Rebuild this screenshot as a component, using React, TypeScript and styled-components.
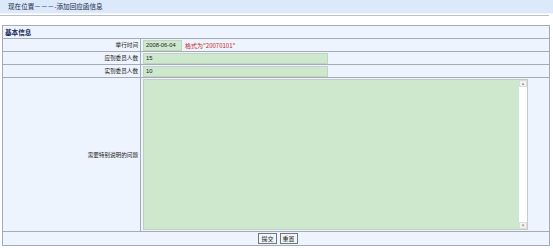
import styled, { createGlobalStyle } from 'styled-components'

const GlobalStyle = createGlobalStyle`
    html, body {
        margin: 0;
        padding: 0;
        background: #fff;
        font-family: "Noto Sans CJK SC", "Noto Sans", sans-serif;
        -webkit-text-size-adjust: none;
    }
`

const Location = styled.div`
    height: 13px;
    line-height: 13px;
    padding-left: 8px;
    background: #dbe9fa;
    color: #1c2c4c;
    font-size: 6.6px;
    border-bottom: 1px solid #f4f8fd;
`
const LocationRule = styled.div`
    height: 1px;
    margin: 1px 4px 0 0;
    background: #b9c1c9;
`
const Panel = styled.div`
    margin: 9px 3px 0 2px;
    border: 1px solid #a3acb6;
    display: grid;
    grid-template-columns: 138px 1fr;
    background: #eef4fd;
`
const Caption = styled.div`
    grid-column: 1 / -1;
    height: 12px;
    line-height: 12px;
    padding-left: 2px;
    font-size: 6.6px;
    font-weight: 700;
    color: #101a58;
    border-bottom: 1px solid #a3acb6;
`
const Label = styled.div<{ $tall?: boolean }>`
    display: flex;
    align-items: center;
    justify-content: flex-end;
    padding-right: 2px;
    height: ${props => props.$tall ? '153px' : '12px'};
    font-size: 5.6px;
    color: #222;
    border-right: 1px solid #a3acb6;
    border-bottom: 1px solid #a3acb6;
`
const Field = styled.div`
    display: flex;
    align-items: center;
    gap: 3px;
    padding-left: 2px;
    border-bottom: 1px solid #a3acb6;
`
const TextInput = styled.input<{ $width: string }>`
    box-sizing: border-box;
    width: ${props => props.$width};
    height: 11px;
    margin: 0;
    padding: 0 2px;
    border: 1px solid #c4d2c4;
    background: #cde8cd;
    font-family: "Liberation Sans", sans-serif;
    font-size: 5.8px;
    color: #222;
    outline: none;
`
const Hint = styled.span`
    font-size: 6px;
    color: #c41a1a;
    font-family: "Noto Sans CJK SC", sans-serif;
`
const RemarksBox = styled.div`
    display: flex;
    width: 385px;
    height: 151px;
    border: 1px solid #c4ccc4;
    box-sizing: border-box;
`
const Remarks = styled.textarea`
    flex: 1;
    margin: 0;
    padding: 0;
    border: none;
    background: #cde8cd;
    resize: none;
    outline: none;
    overflow: hidden;
`
const ScrollTrack = styled.div`
    width: 8px;
    display: flex;
    flex-direction: column;
    justify-content: space-between;
    background: #fff;
`
const ScrollArrow = styled.div`
    height: 7px;
    box-sizing: border-box;
    border: 1px solid #dcdcdc;
    background: #f3f3f3;
    color: #999;
    font-size: 5px;
    line-height: 5px;
    text-align: center;
    font-family: "DejaVu Sans", sans-serif;
`
const Actions = styled.div`
    grid-column: 1 / -1;
    display: flex;
    justify-content: center;
    gap: 3px;
    padding: 1px 0 1px 4px;
`
const Button = styled.button`
    height: 11px;
    padding: 0 2px;
    margin: 0;
    border: 1px solid #6f7780;
    background: #f2f4f6;
    font-family: "Noto Sans CJK SC", sans-serif;
    font-size: 6px;
    line-height: 9px;
    color: #222;
`

export default function App() {
    return (
        <>
            <GlobalStyle />
            <Location>现在位置－－－-添加回应函信息</Location>
            <LocationRule />
            <Panel>
                <Caption>基本信息</Caption>
                <Label>举行时间</Label>
                <Field>
                    <TextInput $width="39px" defaultValue="2008-06-04" />
                    <Hint>格式为"20070101"</Hint>
                </Field>
                <Label>应到委员人数</Label>
                <Field>
                    <TextInput $width="185px" defaultValue="15" />
                </Field>
                <Label>实到委员人数</Label>
                <Field>
                    <TextInput $width="185px" defaultValue="10" />
                </Field>
                <Label $tall>需要特别说明的问题</Label>
                <Field>
                    <RemarksBox>
                        <Remarks />
                        <ScrollTrack>
                            <ScrollArrow>▴</ScrollArrow>
                            <ScrollArrow>▾</ScrollArrow>
                        </ScrollTrack>
                    </RemarksBox>
                </Field>
                <Actions>
                    <Button>提交</Button>
                    <Button>重置</Button>
                </Actions>
            </Panel>
        </>
    )
}
